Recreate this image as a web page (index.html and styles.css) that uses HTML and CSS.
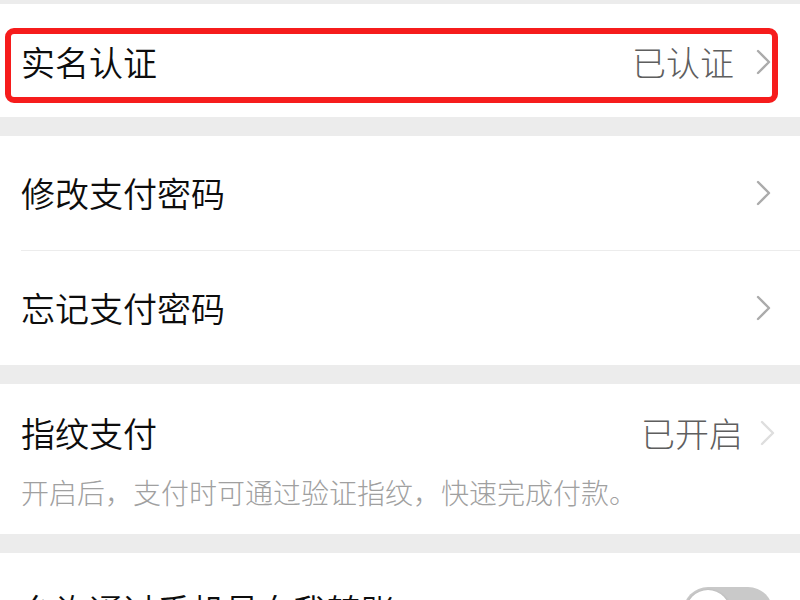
FILE: index.html
```html
<!DOCTYPE html>
<html lang="zh-CN">
<head>
<meta charset="utf-8">
<title>支付设置</title>
<link rel="stylesheet" href="styles.css">
</head>
<body>
<div class="page">
  <section class="group group-first">
    <div class="row row-marked">
      <span class="title">实名认证</span>
      <span class="side">
        <span class="value">已认证</span>
        <svg class="chev" width="15" height="26" viewBox="0 0 15 26"><polyline points="2,2 13,13 2,24" fill="none" stroke="#ababab" stroke-width="2.4" stroke-linecap="round" stroke-linejoin="round"/></svg>
      </span>
    </div>
  </section>

  <section class="group">
    <div class="row">
      <span class="title">修改支付密码</span>
      <span class="side">
        <svg class="chev" width="15" height="26" viewBox="0 0 15 26"><polyline points="2,2 13,13 2,24" fill="none" stroke="#ababab" stroke-width="2.4" stroke-linecap="round" stroke-linejoin="round"/></svg>
      </span>
    </div>
    <div class="divider"></div>
    <div class="row">
      <span class="title">忘记支付密码</span>
      <span class="side">
        <svg class="chev" width="15" height="26" viewBox="0 0 15 26"><polyline points="2,2 13,13 2,24" fill="none" stroke="#ababab" stroke-width="2.4" stroke-linecap="round" stroke-linejoin="round"/></svg>
      </span>
    </div>
  </section>

  <section class="group group-finger">
    <div class="row-head">
      <span class="title">指纹支付</span>
      <span class="side side-finger">
        <span class="value">已开启</span>
        <svg class="chev" width="15" height="26" viewBox="0 0 15 26"><polyline points="2,2 13,13 2,24" fill="none" stroke="#dedede" stroke-width="2.4" stroke-linecap="round" stroke-linejoin="round"/></svg>
      </span>
    </div>
    <p class="desc">开启后，支付时可通过验证指纹，快速完成付款。</p>
  </section>

  <section class="group">
    <div class="row">
      <span class="title">允许通过手机号向我转账</span>
      <span class="toggle"><span class="knob"></span></span>
    </div>
  </section>
</div>
</body>
</html>
```

FILE: styles.css
```css
* { box-sizing: border-box; }
html, body { margin: 0; padding: 0; }
body {
  background: #ececec;
  font-family: "Noto Sans CJK SC", "Noto Sans", sans-serif;
  font-weight: 300;
  overflow: hidden;
}
.page {
  padding-top: 4px;
  width: 800px;
}
.group {
  background: #fff;
  margin-bottom: 19px;
}
.group-first { height: 113px; }
.row {
  position: relative;
  height: 114px;
  display: flex;
  align-items: center;
  justify-content: space-between;
  padding: 0 29px 0 21px;
}
.group-first .row { height: 113px; padding-top: 3px; }
.title {
  font-size: 34px;
  line-height: 40px;
  font-weight: 350;
  color: #0d0d0d;
}
.side {
  display: flex;
  align-items: center;
  gap: 22px;
}
.value {
  font-size: 34px;
  line-height: 40px;
  color: #5e5e5e;
}
.chev { display: block; }
.row-marked::after {
  content: "";
  position: absolute;
  left: 5px;
  right: 22px;
  top: 24px;
  height: 63px;
  border: 6px solid #f61c1c;
  border-radius: 9px;
}
.divider {
  height: 1px;
  background: #ececec;
  margin-left: 21px;
}
.group-finger {
  height: 150px;
  margin-bottom: 19px;
  padding: 29px 25px 0 21px;
}
.row-head {
  display: flex;
  align-items: center;
  justify-content: space-between;
}
.side-finger { gap: 17px; }
.desc {
  margin: 22px 0 0;
  font-size: 28px;
  line-height: 34px;
  color: #a0a0a0;
}
.toggle {
  position: relative;
  width: 90px;
  height: 50px;
  border-radius: 25px;
  background: #c9c9c9;
  margin-right: -2px;
  margin-top: 3px;
}
.knob {
  position: absolute;
  left: 3px;
  top: 3px;
  width: 44px;
  height: 44px;
  border-radius: 50%;
  background: #fff;
  box-shadow: 0 1px 3px rgba(0,0,0,0.25);
}
```
